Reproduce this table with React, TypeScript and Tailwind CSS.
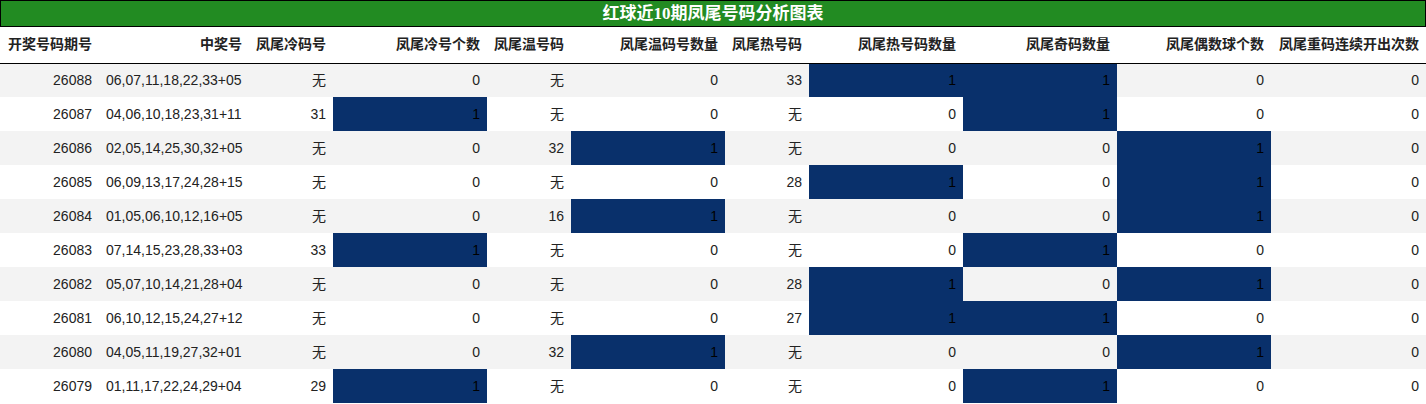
const cols = [
  { title: "开奖号码期号", w: "w-[99px]" },
  { title: "中奖号", w: "w-[150px]" },
  { title: "凤尾冷码号", w: "w-[84px]" },
  { title: "凤尾冷号个数", w: "w-[154px]" },
  { title: "凤尾温号码", w: "w-[84px]" },
  { title: "凤尾温码号数量", w: "w-[154px]" },
  { title: "凤尾热号码", w: "w-[84px]" },
  { title: "凤尾热号码数量", w: "w-[154px]" },
  { title: "凤尾奇码数量", w: "w-[154px]" },
  { title: "凤尾偶数球个数", w: "w-[154px]" },
  { title: "凤尾重码连续开出次数", w: "w-[155px]" },
]

// columns that get the dark fill when the value is 1
const flagCols = [3, 5, 7, 8, 9]

const rows: (string | number)[][] = [
  ["26088", "06,07,11,18,22,33+05", "无", 0, "无", 0, "33", 1, 1, 0, 0],
  ["26087", "04,06,10,18,23,31+11", "31", 1, "无", 0, "无", 0, 1, 0, 0],
  ["26086", "02,05,14,25,30,32+05", "无", 0, "32", 1, "无", 0, 0, 1, 0],
  ["26085", "06,09,13,17,24,28+15", "无", 0, "无", 0, "28", 1, 0, 1, 0],
  ["26084", "01,05,06,10,12,16+05", "无", 0, "16", 1, "无", 0, 0, 1, 0],
  ["26083", "07,14,15,23,28,33+03", "33", 1, "无", 0, "无", 0, 1, 0, 0],
  ["26082", "05,07,10,14,21,28+04", "无", 0, "无", 0, "28", 1, 0, 1, 0],
  ["26081", "06,10,12,15,24,27+12", "无", 0, "无", 0, "27", 1, 1, 0, 0],
  ["26080", "04,05,11,19,27,32+01", "无", 0, "32", 1, "无", 0, 0, 1, 0],
  ["26079", "01,11,17,22,24,29+04", "29", 1, "无", 0, "无", 0, 1, 0, 0],
]

export default function App() {
  return (
    <div className="w-[1426px] bg-white font-['Liberation_Sans','Noto_Sans_CJK_SC',sans-serif] text-[14px] text-[#222]">
      <div className="h-[27px] border border-black bg-[#228b22] flex items-center justify-center">
        <span className="text-white font-bold text-[17px] font-['Liberation_Serif','Noto_Sans_CJK_SC',serif] leading-none">
          红球近10期凤尾号码分析图表
        </span>
      </div>
      <table className="w-full table-fixed border-collapse">
        <colgroup>
          {cols.map((c, i) => (
            <col key={i} className={c.w} />
          ))}
        </colgroup>
        <thead>
          <tr className="h-[36px] border-b border-black">
            {cols.map((c, i) => (
              <th
                key={i}
                className={i === 0 ? "text-left pl-[8px] pr-0 font-bold whitespace-nowrap" : "text-right pr-[7px] font-bold whitespace-nowrap"}
              >
                {c.title}
              </th>
            ))}
          </tr>
        </thead>
        <tbody>
          {rows.map((r, ri) => (
            <tr key={ri} className={ri % 2 === 0 ? "h-[34px] bg-[#f3f3f3]" : "h-[34px] bg-white"}>
              {r.map((v, ci) => {
                const dark = flagCols.includes(ci) && v === 1
                return (
                  <td
                    key={ci}
                    className={
                      (dark ? "bg-[#09306b] text-black " : "") +
                      (ci === 1 ? "text-left pl-[7px] " : "text-right pr-[7px] ") +
                      "whitespace-nowrap"
                    }
                  >
                    {v}
                  </td>
                )
              })}
            </tr>
          ))}
        </tbody>
      </table>
    </div>
  )
}
